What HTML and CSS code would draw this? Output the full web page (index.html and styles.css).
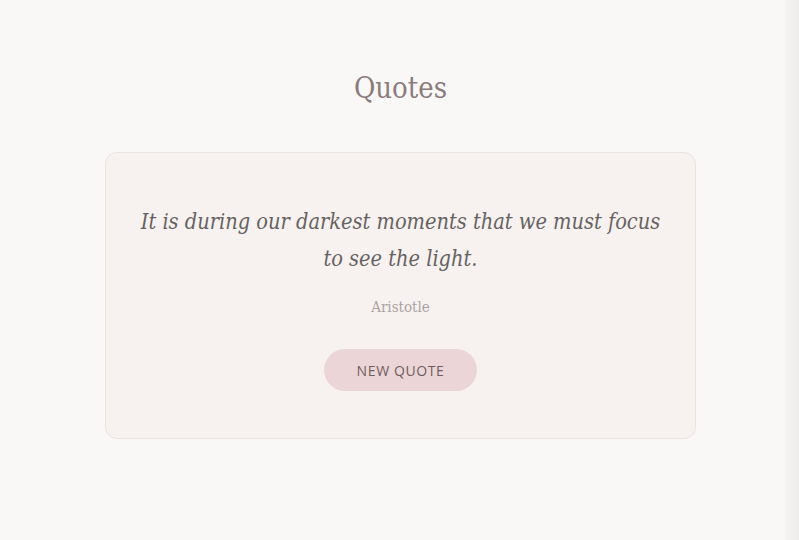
FILE: index.html
```html
<!DOCTYPE html>
<html lang="en">
<head>
<meta charset="utf-8">
<title>Quotes</title>
<link rel="stylesheet" href="styles.css">
</head>
<body>
<div class="page">
  <main class="main">
    <h1 class="title">Quotes</h1>
    <section class="card">
      <p class="quote">It is during our darkest moments that we must focus to see the light.</p>
      <p class="author">Aristotle</p>
      <button class="btn" type="button">NEW QUOTE</button>
    </section>
  </main>
  <div class="scrollbar"></div>
</div>
</body>
</html>
```

FILE: styles.css
```css
* { box-sizing: border-box; }
html, body { margin: 0; padding: 0; height: 100%; }
body {
  background: #faf8f7;
  font-family: "DejaVu Serif Condensed", "DejaVu Serif", Georgia, serif;
  font-stretch: semi-condensed;
  overflow: hidden;
}
.page {
  display: flex;
  height: 540px;
}
.main {
  flex: 1;
  display: flex;
  flex-direction: column;
  align-items: center;
  padding-top: 68px;
  padding-left: 16px;
}
.title {
  margin: 0;
  font-weight: normal;
  font-size: 29px;
  line-height: 40px;
  color: #8c7b7c;
}
.card {
  margin-top: 44px;
  width: 591px;
  height: 287px;
  background: #f7f2f0;
  border: 1px solid #ece2de;
  border-radius: 12px;
  display: flex;
  flex-direction: column;
  align-items: center;
  padding: 50px 30px 0;
}
.quote {
  margin: 0;
  font-style: italic;
  font-size: 21.6px;
  line-height: 37px;
  color: #666262;
  text-align: center;
}
.author {
  margin: 19px 0 0;
  font-size: 15px;
  line-height: 22px;
  color: #aaa3a3;
}
.btn {
  margin-top: 31px;
  width: 153px;
  height: 42px;
  border: none;
  border-radius: 21px;
  background: #ebd5d6;
  color: #6e5d5f;
  font-family: "Open Sans", "Noto Sans", sans-serif;
  font-stretch: normal;
  font-size: 14px;
  letter-spacing: 0.6px;
  padding: 0;
}
.scrollbar {
  width: 14px;
  background: linear-gradient(to right, #f6f4f3, #efedec);
}
```
